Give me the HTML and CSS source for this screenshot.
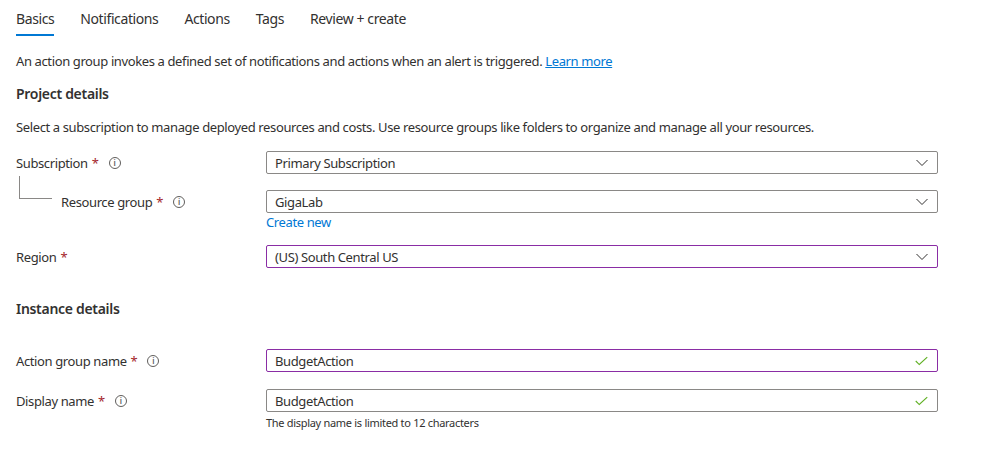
FILE: index.html
```html
<!DOCTYPE html>
<html>
<head>
<meta charset="utf-8">
<link rel="stylesheet" href="styles.css">
</head>
<body>
<div class="page">
  <nav class="tabs">
    <span class="tab active">Basics</span>
    <span class="tab">Notifications</span>
    <span class="tab">Actions</span>
    <span class="tab">Tags</span>
    <span class="tab">Review + create</span>
  </nav>

  <p class="desc">An action group invokes a defined set of notifications and actions when an alert is triggered. <a class="link" href="#">Learn more</a></p>

  <h2 class="section-title">Project details</h2>
  <p class="sub">Select a subscription to manage deployed resources and costs. Use resource groups like folders to organize and manage all your resources.</p>

  <div class="row row-sub">
    <div class="label">Subscription <span class="req">*</span><span class="info">i</span></div>
    <div class="field">
      <div class="input">Primary Subscription<svg class="chev" viewBox="0 0 12 8"><path d="M0.5 1 L6 6.5 L11.5 1" fill="none" stroke="#323130" stroke-width="1"/></svg></div>
    </div>
  </div>

  <div class="row row-rg">
    <div class="label nested"><span class="tree"></span>Resource group <span class="req">*</span><span class="info">i</span></div>
    <div class="field">
      <div class="input">GigaLab<svg class="chev" viewBox="0 0 12 8"><path d="M0.5 1 L6 6.5 L11.5 1" fill="none" stroke="#323130" stroke-width="1"/></svg></div>
      <a class="link create" href="#">Create new</a>
    </div>
  </div>

  <div class="row row-region">
    <div class="label">Region <span class="req">*</span></div>
    <div class="field">
      <div class="input purple">(US) South Central US<svg class="chev" viewBox="0 0 12 8"><path d="M0.5 1 L6 6.5 L11.5 1" fill="none" stroke="#323130" stroke-width="1"/></svg></div>
    </div>
  </div>

  <h2 class="section-title inst">Instance details</h2>

  <div class="row row-agn">
    <div class="label">Action group name <span class="req">*</span><span class="info">i</span></div>
    <div class="field">
      <div class="input purple">BudgetAction<svg class="check" viewBox="0 0 14 10"><path d="M0.8 5 L4.6 8.8 L13.2 0.8" fill="none" stroke="#5fb023" stroke-width="1.2"/></svg></div>
    </div>
  </div>

  <div class="row row-dn">
    <div class="label">Display name <span class="req">*</span><span class="info">i</span></div>
    <div class="field">
      <div class="input">BudgetAction<svg class="check" viewBox="0 0 14 10"><path d="M0.8 5 L4.6 8.8 L13.2 0.8" fill="none" stroke="#5fb023" stroke-width="1.2"/></svg></div>
      <div class="hint">The display name is limited to 12 characters</div>
    </div>
  </div>
</div>
</body>
</html>
```

FILE: styles.css
```css
* { box-sizing: border-box; }
html, body { margin: 0; padding: 0; background: #fff; }
body {
  font-family: "Segoe UI", "Noto Sans", "Open Sans", sans-serif;
  font-size: 13px;
  letter-spacing: -0.38px;
  color: #323130;
}
.page { padding: 0 16px; width: 985px; }

.tabs { display: flex; gap: 26px; height: 36px; padding-top: 9px; }
.tab { font-size: 14px; letter-spacing: -0.4px; line-height: 20px; height: 27px; color: #323130; position: relative; }
.tab.active { border-bottom: 2px solid #0078d4; }

.desc { margin: 15px 0 0; line-height: 20px; }
.link { color: #0078d4; text-decoration: underline; }
.link.create { text-decoration: none; display: block; line-height: 18px; margin-top: 0; }

.section-title { margin: 13px 0 0; font-size: 14px; font-weight: 600; line-height: 20px; letter-spacing: -0.3px; }
.section-title.inst { margin-top: 31px; }
.sub { margin: 13px 0 0; line-height: 20px; }

.row { display: flex; align-items: flex-start; }
.label { width: 250px; display: flex; align-items: center; height: 23px; }
.label.nested { padding-left: 45px; position: relative; }
.tree {
  position: absolute; left: 3px; top: -14px; width: 33px; height: 23px;
  border-left: 1px solid #8a8886; border-bottom: 1px solid #8a8886;
}
.req { color: #a4262c; margin-left: 4px; }
.info {
  display: inline-flex; align-items: center; justify-content: center;
  width: 12px; height: 12px; border: 1px solid #605e5c; border-radius: 50%;
  font-size: 8px; line-height: 1; color: #605e5c; margin-left: 10px; font-weight: 600; letter-spacing: 0;
}
.field { width: 672px; }
.input {
  height: 23px; border: 1px solid #8a8886; border-radius: 2px;
  display: flex; align-items: center; justify-content: space-between;
  padding: 0 8px 0 8px; line-height: 20px;
}
.input.purple { border-color: #8a2da5; }
.chev { width: 12px; height: 8px; margin-right: 1px; }
.check { width: 13px; height: 10px; margin-right: 1px; }

.row-sub { margin-top: 14px; }
.row-rg { margin-top: 16px; }
.row-region { margin-top: 14px; }
.row-agn { margin-top: 30px; }
.row-dn { margin-top: 17px; }
.hint { font-size: 11px; line-height: 16px; margin-top: 3px; letter-spacing: -0.3px; }
```
